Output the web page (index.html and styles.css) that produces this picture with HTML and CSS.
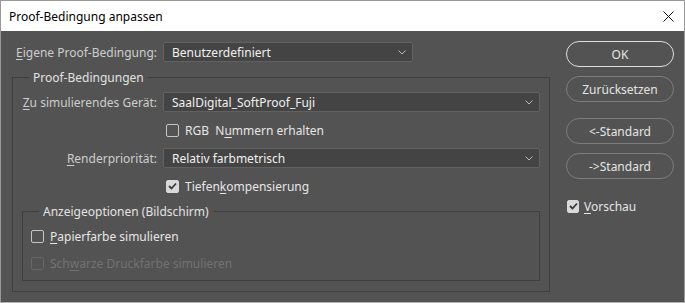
FILE: index.html
```html
<!DOCTYPE html>
<html lang="de">
<head>
    <meta charset="UTF-8">
    <title>Proof-Bedingung anpassen</title>
    <link rel="stylesheet" href="styles.css">
</head>
<body>
    <div class="window">
        <div class="titlebar">
            <span class="title">Proof-Bedingung anpassen</span>
            <span class="close">
                <svg width="11" height="11" viewBox="0 0 11 11"><path d="M0.5 0.5L10.5 10.5M10.5 0.5L0.5 10.5" stroke="#111" stroke-width="1" fill="none"/></svg>
            </span>
        </div>

        <div class="dialog">
            <div class="main">
                <div class="row-top">
                    <label class="label top-label"><u>E</u>igene Proof-Bedingung:</label>
                    <div class="select select-short">
                        <span>Benutzerdefiniert</span>
                        <svg class="chev" width="8" height="5" viewBox="0 0 8 5"><path d="M0.5 0.5L4 4L7.5 0.5" stroke="#b8b8b8" fill="none"/></svg>
                    </div>
                </div>

                <div class="group outer">
                    <div class="legend"><span>Proof-Bedingungen</span></div>

                    <div class="field first">
                        <label class="label"><u>Z</u>u simulierendes Gerät:</label>
                        <div class="select">
                            <span>SaalDigital_SoftProof_Fuji</span>
                            <svg class="chev" width="8" height="5" viewBox="0 0 8 5"><path d="M0.5 0.5L4 4L7.5 0.5" stroke="#b8b8b8" fill="none"/></svg>
                        </div>
                    </div>

                    <div class="check-row indent">
                        <span class="box"></span>
                        <span class="check-text">RGB&nbsp; N<u>u</u>mmern erhalten</span>
                    </div>

                    <div class="field">
                        <label class="label"><u>R</u>enderpriorität:</label>
                        <div class="select">
                            <span>Relativ farbmetrisch</span>
                            <svg class="chev" width="8" height="5" viewBox="0 0 8 5"><path d="M0.5 0.5L4 4L7.5 0.5" stroke="#b8b8b8" fill="none"/></svg>
                        </div>
                    </div>

                    <div class="check-row indent">
                        <span class="box checked">
                            <svg width="9" height="8" viewBox="0 0 9 8"><path d="M1 4L3.5 6.5L8 1.5" stroke="#3a3a3a" stroke-width="1.8" fill="none"/></svg>
                        </span>
                        <span class="check-text">Tiefen<u>k</u>ompensierung</span>
                    </div>

                    <div class="group inner">
                        <div class="legend"><span>Anzeigeoptionen (Bildschirm)</span></div>

                        <div class="check-row sub first-sub">
                            <span class="box"></span>
                            <span class="check-text"><u>P</u>apierfarbe simulieren</span>
                        </div>

                        <div class="check-row sub disabled">
                            <span class="box"></span>
                            <span class="check-text">Sch<u>w</u>arze Druckfarbe simulieren</span>
                        </div>
                    </div>
                </div>
            </div>

            <div class="side">
                <div class="btn btn-ok">OK</div>
                <div class="btn">Zurücksetzen</div>
                <div class="btn btn-gap">&lt;-Standard</div>
                <div class="btn">-&gt;Standard</div>

                <div class="check-row preview">
                    <span class="box checked">
                        <svg width="9" height="8" viewBox="0 0 9 8"><path d="M1 4L3.5 6.5L8 1.5" stroke="#3a3a3a" stroke-width="1.8" fill="none"/></svg>
                    </span>
                    <span class="check-text"><u>V</u>orschau</span>
                </div>
            </div>
        </div>
    </div>
</body>
</html>
```

FILE: styles.css
```css
* {
    margin: 0;
    padding: 0;
    box-sizing: border-box;
}

body {
    width: 685px;
    height: 303px;
    overflow: hidden;
    font-family: "Noto Sans", "Open Sans", sans-serif;
    font-size: 12px;
    background: #fff;
}

.window {
    height: 303px;
    display: flex;
    flex-direction: column;
    border: 1px solid #999;
    border-bottom-color: #b4b4b4;
}

/* Title bar */
.titlebar {
    height: 30px;
    background: #fff;
    display: flex;
    align-items: center;
    justify-content: space-between;
    padding-left: 8px;
    color: #000;
}

.close {
    width: 32px;
    height: 30px;
    display: flex;
    align-items: center;
    justify-content: center;
}

/* Dialog body */
.dialog {
    flex: 1;
    display: flex;
    background: #535353;
    padding: 11px 0 0 11px;
    color: #d2d2d2;
}

.main {
    width: 538px;
}

.row-top {
    display: flex;
    align-items: center;
    height: 20px;
}

.label {
    width: 144px;
    margin-right: 6px;
    text-align: right;
    color: #cdcdcd;
    white-space: nowrap;
}

.top-label {
    width: 145px;
}

u {
    text-decoration: underline;
    text-underline-offset: 2px;
}

.select {
    width: 377px;
    height: 20px;
    display: flex;
    align-items: center;
    justify-content: space-between;
    padding: 0 6px 0 8px;
    background: #444;
    border: 1px solid #616161;
    border-radius: 2px;
    color: #f0f0f0;
}

.select-short {
    width: 250px;
}

/* Group boxes */
.group {
    border: 1px solid #3f3f3f;
}

.outer {
    margin-top: 15px;
    height: 215px;
}

.inner {
    margin: 15px 9px 0 9px;
    height: 70px;
}

.legend {
    height: 16px;
    margin-top: -9px;
    display: flex;
    align-items: center;
}

.legend span {
    margin-left: 16px;
    padding: 0 4px;
    background: #535353;
    color: #e2e2e2;
}

.field {
    display: flex;
    align-items: center;
    height: 20px;
    margin-top: 8px;
}

.field.first {
    margin-top: 7px;
}

/* Checkboxes */
.check-row {
    display: flex;
    align-items: center;
    height: 20px;
    margin-top: 8px;
}

.indent {
    padding-left: 153px;
}

.sub {
    padding-left: 8px;
    margin-top: 7px;
}

.box {
    width: 13px;
    height: 13px;
    border: 1px solid #c6c6c6;
    border-radius: 2px;
    margin-right: 6px;
    display: flex;
    align-items: center;
    justify-content: center;
}

.box.checked {
    background: #d9d9d9;
    border-color: #d9d9d9;
}

.check-text {
    color: #e6e6e6;
    white-space: nowrap;
}

.disabled .box {
    border-color: #676767;
}

.disabled .check-text {
    color: #727272;
}

/* Buttons */
.side {
    width: 108px;
    margin-left: 16px;
    margin-top: -1px;
    display: flex;
    flex-direction: column;
}

.btn {
    height: 26px;
    margin-bottom: 9px;
    border: 1px solid #7d7d7d;
    border-radius: 13px;
    display: flex;
    align-items: center;
    justify-content: center;
    color: #e4e4e4;
}

.btn-ok {
    border-color: #dedede;
}

.btn-gap {
    margin-top: 7px;
}

.preview {
    margin-top: 8px;
    padding-left: 1px;
}

.preview .box {
    width: 12px;
    margin-right: 5px;
}
```
